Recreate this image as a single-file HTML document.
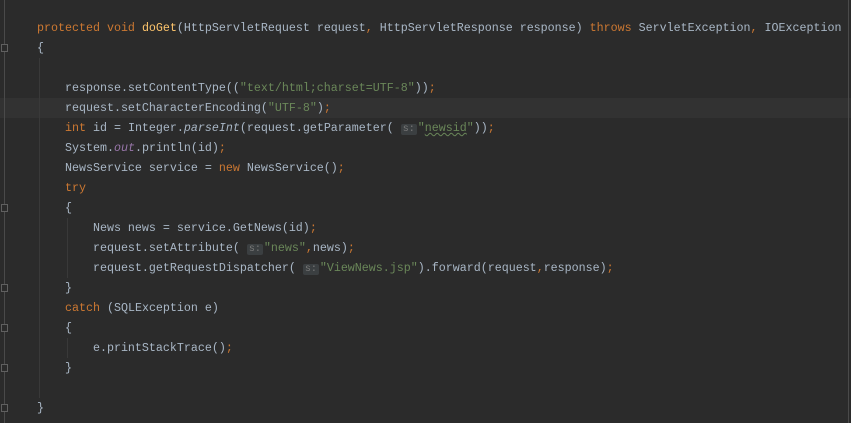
<!DOCTYPE html>
<html><head><meta charset="utf-8"><style>
html,body{margin:0;padding:0;width:851px;height:423px;overflow:hidden;background:#2b2b2b;}
.ed{position:relative;width:851px;height:423px;font-family:"Liberation Mono",monospace;font-size:11.67px;color:#a9b7c6;}
.l{position:absolute;left:37px;height:20px;line-height:20px;white-space:pre;}
.k{color:#cc7832}.s{color:#6a8759}.m{color:#ffc66d}.f{color:#9876aa;font-style:italic}
.h{background:#3b3f41;color:#787878;font-size:10px;padding:0 2px;border-radius:2px;margin-right:1px}
.u{text-decoration:underline wavy #6a8759;text-decoration-thickness:1px}
.g{position:absolute;width:1px;background:#393939}
.cur{position:absolute;left:0;top:98px;width:851px;height:20px;background:#323232}
.fold{position:absolute;left:1px;width:7px;height:8px;border:1px solid #606060;box-sizing:border-box;background:#2b2b2b}
</style></head><body><div class="ed">
<div class="cur"></div>
<div class="g" style="left:4px;top:0;height:423px;background:#4a4a4a"></div>
<div class="g" style="left:848px;top:0;height:423px;background:#4a4a4a"></div>
<div class="g" style="left:39px;top:58px;height:340px"></div>
<div class="g" style="left:67px;top:218px;height:60px"></div>
<div class="g" style="left:67px;top:338px;height:20px"></div>
<div class="fold" style="top:44px"></div>
<div class="fold" style="top:204px"></div>
<div class="fold" style="top:284px"></div>
<div class="fold" style="top:324px"></div>
<div class="fold" style="top:364px"></div>
<div class="fold" style="top:404px"></div>
<div class="l" style="top:18px"><span class="k">protected void </span><span class="m">doGet</span>(HttpServletRequest request<span class="k">, </span>HttpServletResponse response) <span class="k">throws </span>ServletException<span class="k">, </span>IOException</div>
<div class="l" style="top:38px">{</div>
<div class="l" style="top:78px">    response.setContentType((<span class="s">"text/html;charset=UTF-8"</span>))<span class="k">;</span></div>
<div class="l" style="top:98px">    request.setCharacterEncoding(<span class="s">"UTF-8"</span>)<span class="k">;</span></div>
<div class="l" style="top:118px">    <span class="k">int </span>id = Integer.<i>parseInt</i>(request.getParameter( <span class="h">s:</span><span class="s">"<span class="u">newsid</span>"</span>))<span class="k">;</span></div>
<div class="l" style="top:138px">    System.<span class="f">out</span>.println(id)<span class="k">;</span></div>
<div class="l" style="top:158px">    NewsService service = <span class="k">new </span>NewsService()<span class="k">;</span></div>
<div class="l" style="top:178px">    <span class="k">try</span></div>
<div class="l" style="top:198px">    {</div>
<div class="l" style="top:218px">        News news = service.GetNews(id)<span class="k">;</span></div>
<div class="l" style="top:238px">        request.setAttribute( <span class="h">s:</span><span class="s">"news"</span><span class="k">,</span>news)<span class="k">;</span></div>
<div class="l" style="top:258px">        request.getRequestDispatcher( <span class="h">s:</span><span class="s">"ViewNews.jsp"</span>).forward(request<span class="k">,</span>response)<span class="k">;</span></div>
<div class="l" style="top:278px">    }</div>
<div class="l" style="top:298px">    <span class="k">catch </span>(SQLException e)</div>
<div class="l" style="top:318px">    {</div>
<div class="l" style="top:338px">        e.printStackTrace()<span class="k">;</span></div>
<div class="l" style="top:358px">    }</div>
<div class="l" style="top:398px">}</div>
</div></body></html>
